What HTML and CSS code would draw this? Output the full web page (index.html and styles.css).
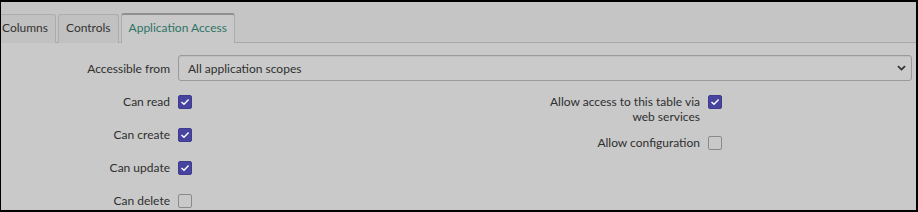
FILE: index.html
```html
<!DOCTYPE html>
<html lang="en">
<head>
    <meta charset="UTF-8">
    <title>Table - Application Access</title>
    <link rel="stylesheet" href="styles.css">
</head>
<body>
    <div class="panel">
        <div class="tab-bar">
            <div class="tab tab-first">Columns</div>
            <div class="tab">Controls</div>
            <div class="tab active">Application Access</div>
        </div>

        <div class="tab-content">
            <div class="form-row">
                <div class="form-label">Accessible from</div>
                <div class="select-box">
                    <span>All application scopes</span>
                    <svg class="chevron" width="9" height="6" viewBox="0 0 9 6">
                        <path d="M1 1.2 L4.5 4.6 L8 1.2" fill="none" stroke="#333" stroke-width="1.8"/>
                    </svg>
                </div>
            </div>

            <div class="check-section">
                <div class="check-col">
                    <div class="check-field">
                        <div class="form-label">Can read</div>
                        <span class="checkbox checked"><svg width="10" height="8" viewBox="0 0 10 8"><path d="M1.5 4 L4 6.3 L8.6 1.5" fill="none" stroke="#fff" stroke-width="1.4"/></svg></span>
                    </div>
                    <div class="check-field">
                        <div class="form-label">Can create</div>
                        <span class="checkbox checked"><svg width="10" height="8" viewBox="0 0 10 8"><path d="M1.5 4 L4 6.3 L8.6 1.5" fill="none" stroke="#fff" stroke-width="1.4"/></svg></span>
                    </div>
                    <div class="check-field">
                        <div class="form-label">Can update</div>
                        <span class="checkbox checked"><svg width="10" height="8" viewBox="0 0 10 8"><path d="M1.5 4 L4 6.3 L8.6 1.5" fill="none" stroke="#fff" stroke-width="1.4"/></svg></span>
                    </div>
                    <div class="check-field">
                        <div class="form-label">Can delete</div>
                        <span class="checkbox"></span>
                    </div>
                </div>

                <div class="check-col right-col">
                    <div class="check-field">
                        <div class="form-label wide">Allow access to this table via web services</div>
                        <span class="checkbox checked"><svg width="10" height="8" viewBox="0 0 10 8"><path d="M1.5 4 L4 6.3 L8.6 1.5" fill="none" stroke="#fff" stroke-width="1.4"/></svg></span>
                    </div>
                    <div class="check-field">
                        <div class="form-label wide">Allow configuration</div>
                        <span class="checkbox"></span>
                    </div>
                </div>
            </div>
        </div>
    </div>
</body>
</html>
```

FILE: styles.css
```css
* {
    margin: 0;
    padding: 0;
    box-sizing: border-box;
    font-family: 'Lato', 'Liberation Sans', sans-serif;
}

body {
    background-color: #000;
    padding: 2px 2px 2px 1px;
    height: 212px;
    overflow: hidden;
}

.panel {
    background: #c9c9c9;
    height: 208px;
    overflow: hidden;
    color: #2f2f2f;
    font-size: 12px;
}

/* Tabs */
.tab-bar {
    display: flex;
    align-items: flex-end;
    height: 41px;
    padding-top: 11px;
    background: #c5c5c5;
    border-bottom: 1px solid #a9a9a9;
}

.tab {
    height: 29px;
    line-height: 26px;
    padding: 0 7px;
    margin-right: 2px;
    background: #c1c1c1;
    border: 1px solid #acacac;
    border-bottom: none;
    border-radius: 3px 3px 0 0;
    color: #333;
    margin-bottom: -1px;
}

.tab-first {
    margin-left: -12px;
    padding-left: 12px;
}

.tab.active {
    height: 30px;
    background: #c9c9c9;
    border-top: 2px solid #8e8e8e;
    color: #2d7466;
    padding: 0 7px;
}

/* Form */
.tab-content {
    padding: 12px 4px 0 0;
}

.form-row {
    display: flex;
    align-items: center;
    gap: 8px;
}

.form-label {
    width: 169px;
    text-align: right;
    line-height: 15px;
}

.select-box {
    flex: 1;
    height: 26px;
    display: flex;
    align-items: center;
    justify-content: space-between;
    padding: 0 5px 0 9px;
    border: 1px solid #999;
    border-radius: 3px;
    background: #cacaca;
    box-shadow: inset 0 1px 1px rgba(0,0,0,0.06);
}

.check-section {
    display: flex;
    padding-top: 13px;
}

.check-col {
    width: 360px;
}

.right-col {
    margin-left: 169px;
}

.check-field {
    display: flex;
    align-items: flex-start;
    gap: 8px;
    margin-bottom: 18px;
}

.right-col .check-field {
    margin-bottom: 11px;
}

.form-label.wide {
    width: 170px;
    padding-left: 14px;
}

.checkbox {
    width: 14px;
    height: 14px;
    margin-top: 1px;
    border: 1px solid #8a8a8a;
    border-radius: 2px;
    display: flex;
    align-items: center;
    justify-content: center;
}

.checkbox.checked {
    background: #4744a0;
    border-color: #3f3c8e;
}
```
